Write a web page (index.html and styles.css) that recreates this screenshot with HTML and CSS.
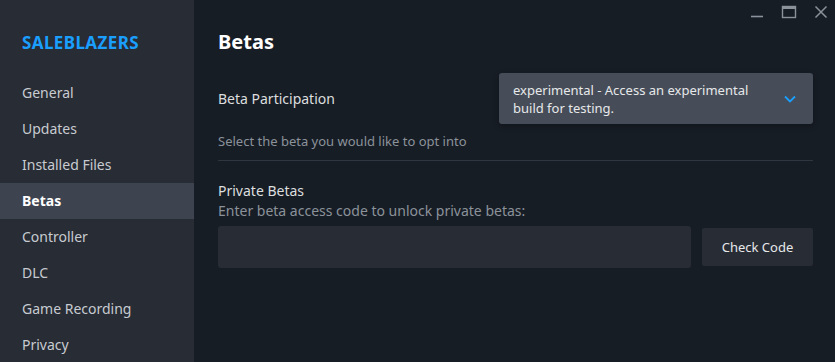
FILE: index.html
```html
<!DOCTYPE html>
<html lang="en">
<head>
  <meta charset="UTF-8">
  <title>Properties - Betas</title>
  <link rel="stylesheet" href="styles.css">
</head>
<body>
  <div class="window">
    <!-- Sidebar -->
    <nav class="sidebar">
      <div class="game-title">SALEBLAZERS</div>
      <ul class="nav-list">
        <li>General</li>
        <li>Updates</li>
        <li>Installed Files</li>
        <li class="active">Betas</li>
        <li>Controller</li>
        <li>DLC</li>
        <li>Game Recording</li>
        <li>Privacy</li>
      </ul>
    </nav>

    <!-- Main panel -->
    <main class="content">
      <div class="titlebar">
        <button class="win-btn" aria-label="Minimize">
          <svg width="14" height="14" viewBox="0 0 14 14"><line x1="1" y1="11.5" x2="13" y2="11.5" stroke="#8b929a" stroke-width="1.6"/></svg>
        </button>
        <button class="win-btn" aria-label="Maximize">
          <svg width="16" height="14" viewBox="0 0 16 14"><rect x="1.5" y="1.5" width="13" height="11" fill="none" stroke="#8b929a" stroke-width="1.4"/><line x1="1.5" y1="3" x2="14.5" y2="3" stroke="#8b929a" stroke-width="2"/></svg>
        </button>
        <button class="win-btn" aria-label="Close">
          <svg width="14" height="14" viewBox="0 0 14 14"><path d="M1.5 1.5 L12.5 12.5 M12.5 1.5 L1.5 12.5" stroke="#8b929a" stroke-width="1.5"/></svg>
        </button>
      </div>

      <h1>Betas</h1>

      <div class="field-row">
        <div class="field-label">Beta Participation</div>
        <div class="dropdown">
          <span class="dropdown-text">experimental - Access an experimental build for testing.</span>
          <svg class="chevron" width="14" height="10" viewBox="0 0 14 10"><path d="M2 2.5 L7 7.5 L12 2.5" fill="none" stroke="#1a9fff" stroke-width="1.8"/></svg>
        </div>
      </div>
      <div class="field-desc">Select the beta you would like to opt into</div>

      <div class="private">
        <div class="private-title">Private Betas</div>
        <div class="private-desc">Enter beta access code to unlock private betas:</div>
        <div class="code-row">
          <input class="code-input" type="text">
          <button class="check-btn">Check Code</button>
        </div>
      </div>
    </main>
  </div>
</body>
</html>
```

FILE: styles.css
```css
/* Reset */
* {
  box-sizing: border-box;
  margin: 0;
  padding: 0;
}
html, body {
  height: 100%;
}
body {
  font-family: 'Noto Sans', 'Open Sans', sans-serif;
  background: #171d25;
  color: #dcdedf;
  overflow: hidden;
}
.window {
  display: flex;
  height: 100%;
}
/* Sidebar */
.sidebar {
  width: 194px;
  flex-shrink: 0;
  background: #282c34;
  padding-top: 31px;
}
.game-title {
  padding-left: 22px;
  font-size: 17px;
  font-weight: bold;
  color: #1a9fff;
  letter-spacing: 0.4px;
  height: 24px;
  line-height: 24px;
}
.nav-list {
  list-style: none;
  margin-top: 20px;
}
.nav-list li {
  height: 36px;
  line-height: 36px;
  padding-left: 22px;
  font-size: 14px;
  color: #c7cbd1;
}
.nav-list li.active {
  background: #3d4450;
  color: #ffffff;
  font-weight: bold;
}
/* Main content */
.content {
  flex: 1;
  padding: 0 22px 0 24px;
}
.titlebar {
  display: flex;
  justify-content: flex-end;
  gap: 10px;
  height: 24px;
  margin-right: -22px;
  padding-right: 3px;
}
.win-btn {
  background: none;
  border: none;
  width: 22px;
  height: 24px;
  display: flex;
  align-items: center;
  justify-content: center;
}
h1 {
  font-size: 20px;
  font-weight: bold;
  color: #ffffff;
  line-height: 28px;
  margin-top: 4px;
}
.field-row {
  display: flex;
  align-items: center;
  justify-content: space-between;
  margin-top: 17px;
}
.field-label {
  font-size: 14px;
}
.dropdown {
  width: 314px;
  height: 51px;
  background: #464d58;
  border-radius: 3px;
  display: flex;
  align-items: center;
  padding: 0 16px 0 14px;
  gap: 16px;
  box-shadow: 0 2px 6px rgba(0, 0, 0, 0.3);
}
.dropdown-text {
  flex: 1;
  font-size: 13px;
  line-height: 18px;
  color: #e6e8ea;
}
.field-desc {
  margin-top: 8px;
  font-size: 13px;
  color: #8b929a;
  padding-bottom: 10px;
  border-bottom: 1px solid #2f3640;
}
/* Private betas */
.private {
  margin-top: 20px;
}
.private-title {
  font-size: 14px;
  line-height: 20px;
}
.private-desc {
  font-size: 14px;
  line-height: 20px;
  color: #8b929a;
}
.code-row {
  display: flex;
  align-items: center;
  gap: 11px;
  margin-top: 5px;
}
.code-input {
  flex: 1;
  height: 42px;
  background: #282c35;
  border: none;
  border-radius: 3px;
  outline: none;
  color: #dcdedf;
}
.check-btn {
  width: 111px;
  height: 38px;
  background: #282c35;
  border: none;
  border-radius: 2px;
  font-family: inherit;
  font-size: 13px;
  color: #e6e8ea;
}
```
